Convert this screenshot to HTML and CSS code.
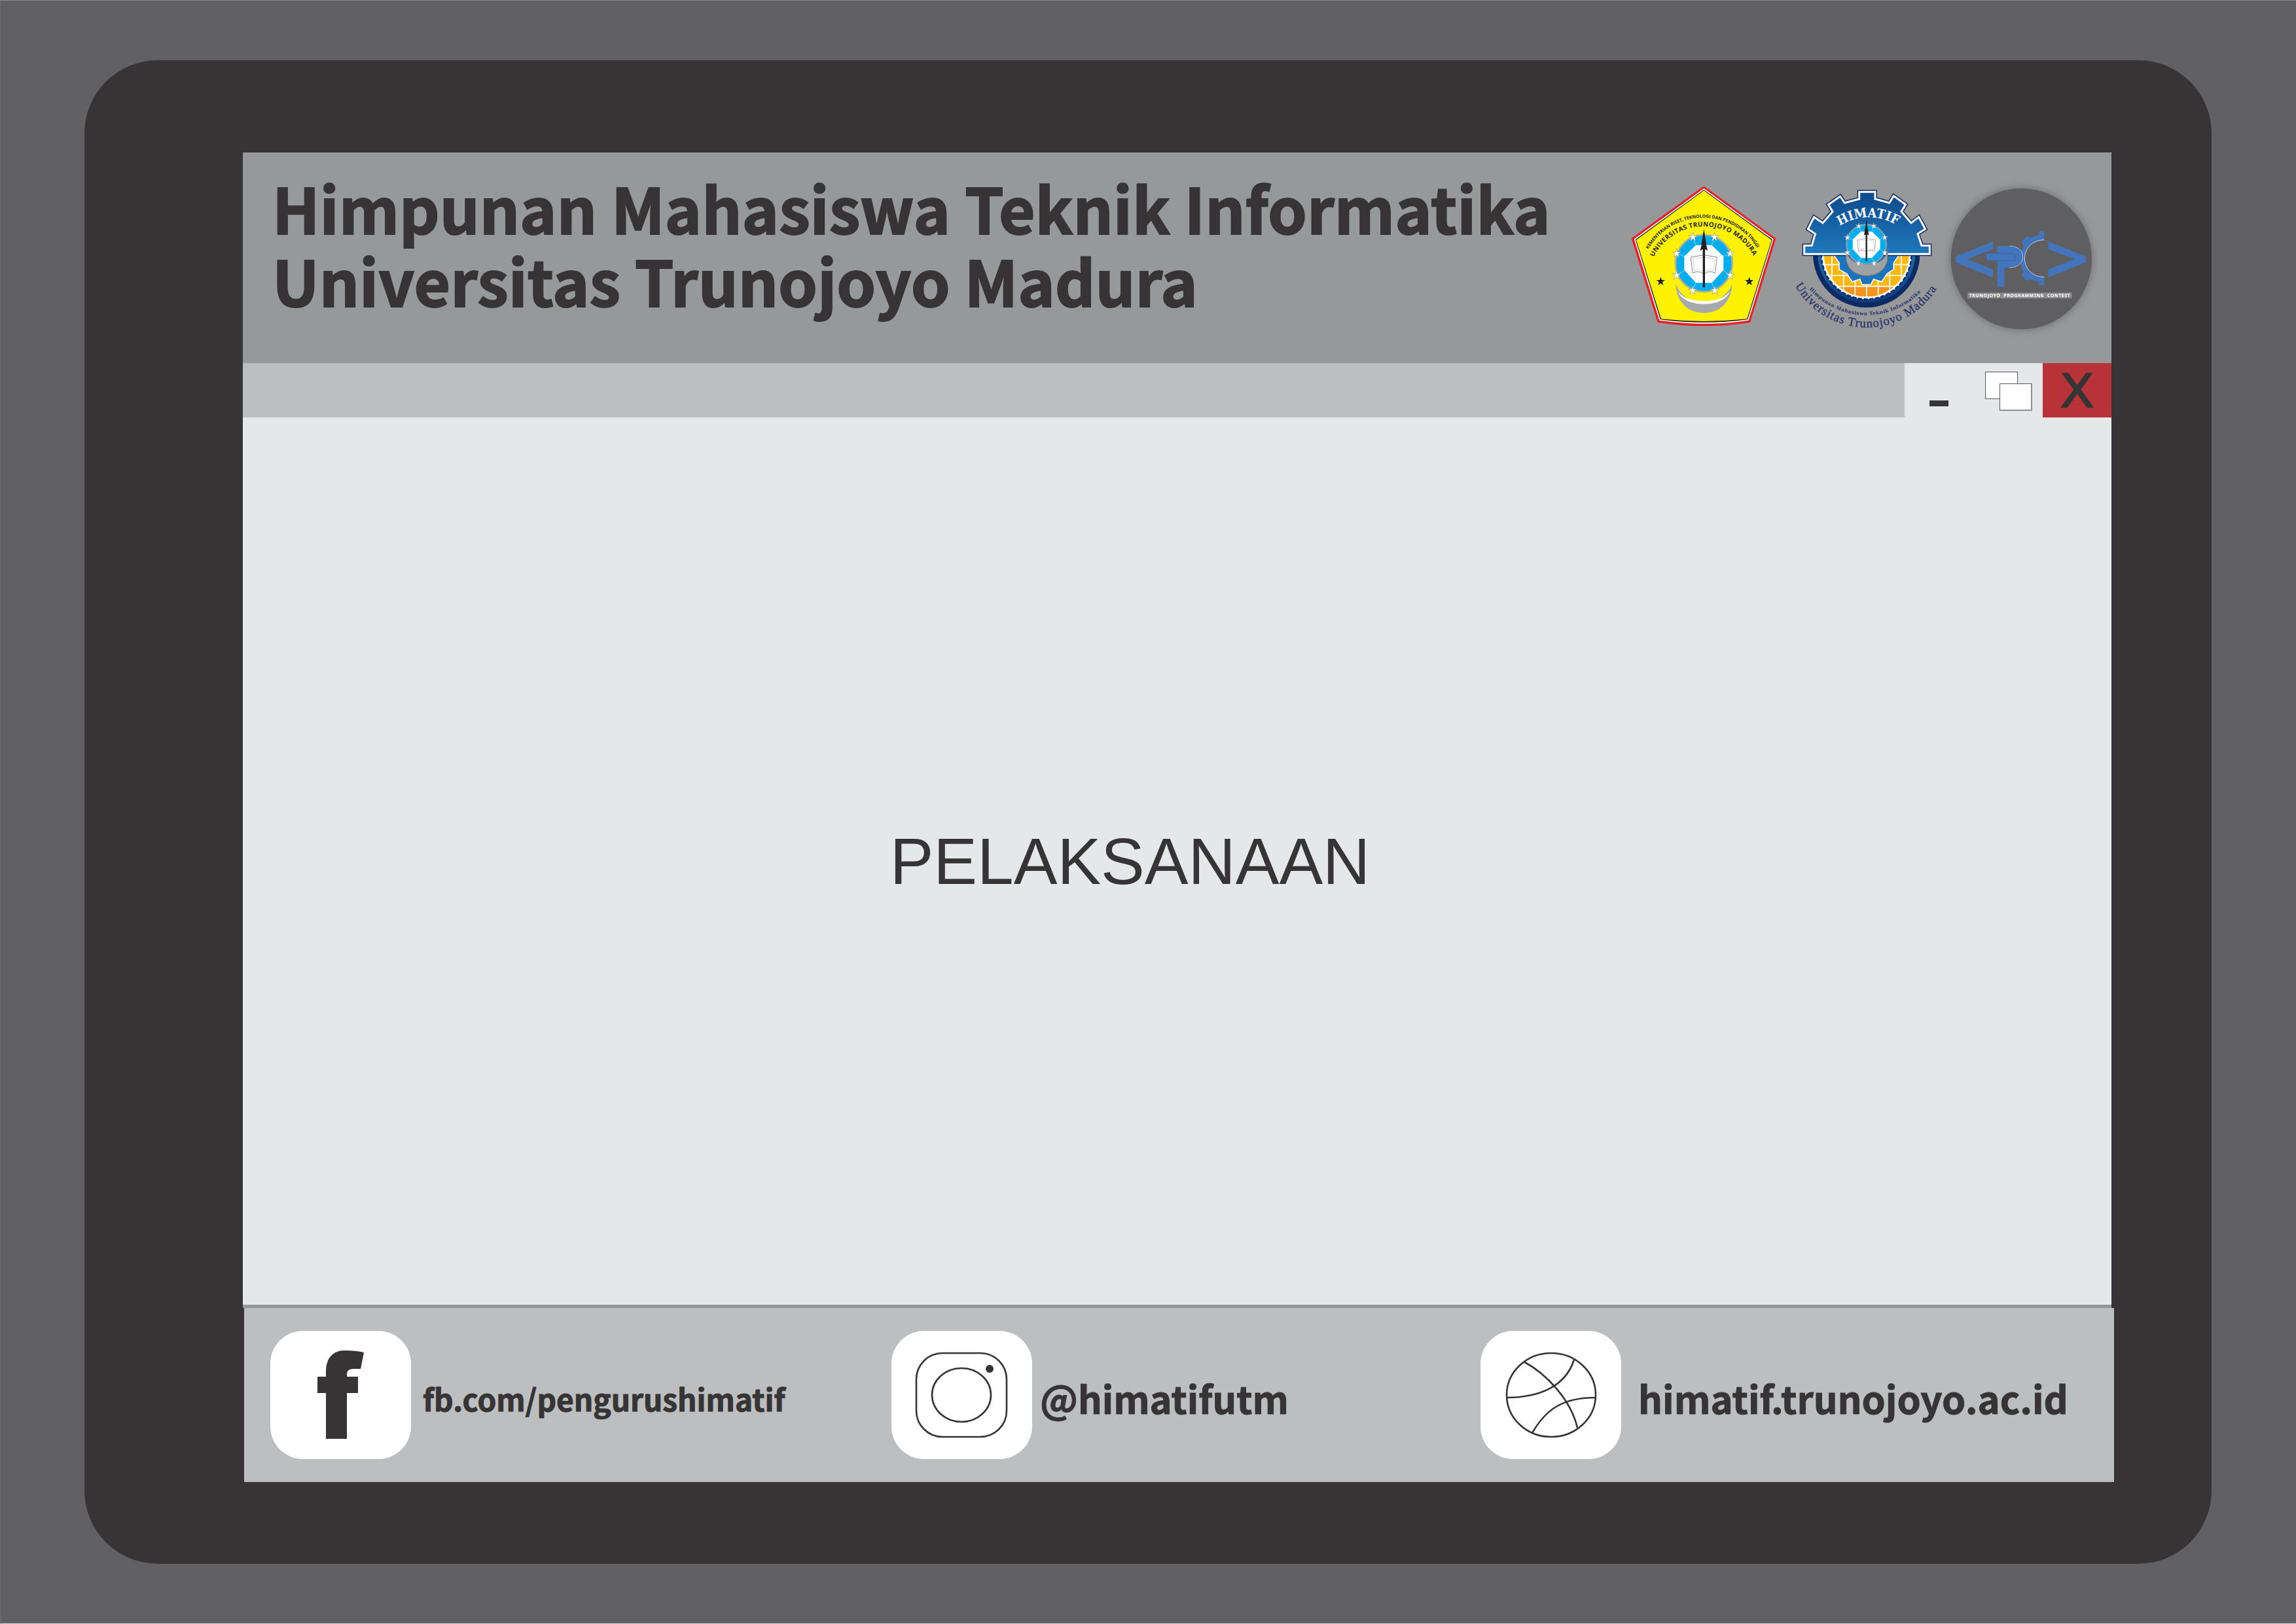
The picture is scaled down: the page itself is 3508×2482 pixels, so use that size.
FILE: index.html
```html
<!DOCTYPE html>
<html lang="id">
<head>
<meta charset="utf-8">
<title>Himpunan Mahasiswa Teknik Informatika</title>
<link rel="stylesheet" href="styles.css">
</head>
<body>
<svg class="defs" width="0" height="0" aria-hidden="true">
  <defs>
    <polygon id="star" points="0,-20 5,-6 20,-6 8,3 12,18 0,9 -12,18 -8,3 -20,-6 -5,-6"/>
    <polygon id="spark" points="0,-22 4,-6 20,-7 7,2 12,18 0,8 -12,18 -7,2 -20,-7 -4,-6" fill="#fff" stroke="#8f9194" stroke-width="2"/>
    <g id="emblem">
      <circle r="130" fill="#00aeef"/>
      <circle r="130" fill="none" stroke="#a7a9ac" stroke-width="10" stroke-dasharray="5 2"/>
      <g stroke="#d7e8ef" stroke-width="2">
        <line x1="-50" y1="-120" x2="-35" y2="-77"/><line x1="48" y1="-120" x2="35" y2="-77"/>
        <line x1="120" y1="-45" x2="85" y2="-30"/><line x1="120" y1="55" x2="85" y2="30"/>
        <line x1="50" y1="125" x2="35" y2="85"/><line x1="-52" y1="125" x2="-35" y2="85"/>
        <line x1="-125" y1="55" x2="-85" y2="30"/><line x1="-125" y1="-45" x2="-85" y2="-30"/>
      </g>
      <polygon points="-35,-80 35,-80 87,-30 87,30 35,87 -35,87 -87,30 -87,-30" fill="#fff" stroke="#fff" stroke-width="6" stroke-linejoin="round"/>
      <path d="M-60 -28 L0 -38 L60 -28 L52 45 Q22 30 0 50 Q-22 30 -52 45 Z" fill="#fff" stroke="#6d6e71" stroke-width="2.5"/>
      <path d="M-50 -20 L0 -28 L50 -20 L44 35 Q20 22 0 40 Q-20 22 -44 35 Z" fill="none" stroke="#a7a9ac" stroke-width="1.5"/>
      <use href="#spark" x="-50" y="-120"/><use href="#spark" x="48" y="-120"/>
      <use href="#spark" x="120" y="-45"/><use href="#spark" x="120" y="55"/>
      <use href="#spark" x="50" y="125"/><use href="#spark" x="-52" y="125"/>
      <use href="#spark" x="-125" y="55"/><use href="#spark" x="-125" y="-45"/>
      <rect x="-5" y="-55" width="10" height="165" fill="#231f20"/>
      <path d="M0 -158 C6 -125 6 -105 12 -90 C8 -80 18 -70 16 -58 L5 -65 L5 -48 L-5 -48 L-5 -65 L-16 -58 C-16 -70 -8 -80 -12 -90 C-6 -105 -6 -125 0 -158 Z" fill="#231f20"/>
    </g>
    <linearGradient id="gearBlue" x1="0" y1="0" x2="0" y2="1">
      <stop offset="0" stop-color="#0d4a8b"/>
      <stop offset="1" stop-color="#1f78bd"/>
    </linearGradient>
    <linearGradient id="ringBlue" x1="0" y1="0" x2="0" y2="1">
      <stop offset="0" stop-color="#1c6fb4"/>
      <stop offset="1" stop-color="#0f3a7c"/>
    </linearGradient>
    <clipPath id="disc"><path d="M170 355 A195 195 0 0 0 560 355 Z"/></clipPath>
    <path id="arcUtmSmall" d="M115 333 A290 290 0 0 1 617 333"/>
    <path id="arcUtmBig" d="M140 368 A259 259 0 0 1 600 368"/>
    <path id="arcHimatif" d="M243 226 A245 245 0 0 1 510 226"/>
    <path id="arcHimpunan" d="M103 515 A346 346 0 0 0 627 515"/>
    <path id="arcUniv" d="M38 500 A378 378 0 0 0 695 500"/>
    <filter id="soft" x="-20%" y="-20%" width="140%" height="140%"><feGaussianBlur stdDeviation="18"/></filter>
  </defs>
</svg>

<main class="panel">
  <section class="window">
    <header class="head">
      <h1 class="title">Himpunan Mahasiswa Teknik Informatika<br>Universitas Trunojoyo Madura</h1>
      <div class="logos">
        <svg class="logo logo-utm" viewBox="0 0 780 720">
          <path d="M370 43 L700 283 L582 668 Q370 702 158 668 L38 283 Z" fill="#ed1c24"/>
          <path d="M370 54 L689 286 L575 659 Q370 690 166 659 L50 286 Z" fill="#fff"/>
          <path d="M370 60 L684 288 L571 655 Q370 682 170 655 L56 288 Z" fill="#231f20"/>
          <path d="M370 64 L680 290 L568 652 Q370 674 174 652 L60 290 Z" fill="#fff200"/>
          <use href="#emblem" x="370" y="397"/>
          <path d="M240 490 C245 580 300 625 370 625 C440 625 495 580 500 490 C480 545 430 578 370 578 C310 578 260 545 240 490 Z" fill="#a7a9ac"/>
          <path d="M250 525 C275 560 320 570 370 570 C420 570 465 560 490 525 C470 570 420 584 370 584 C320 584 270 570 250 525 Z" fill="#fff"/>
          <use href="#star" x="172" y="480" fill="#231f20"/>
          <use href="#star" x="578" y="480" fill="#231f20"/>
          <text class="arc-small"><textPath href="#arcUtmSmall" textLength="600">KEMENTERIAN RISET, TEKNOLOGI  DAN PENDIDIKAN TINGGI</textPath></text>
          <text class="arc-big"><textPath href="#arcUtmBig" textLength="560">UNIVERSITAS TRUNOJOYO MADURA</textPath></text>
        </svg>
        <svg class="logo logo-himatif" viewBox="0 0 780 720">
          <path d="M120 355 A245 245 0 0 0 610 355 Z" fill="#0e2a63"/>
          <path d="M142 355 A223 223 0 0 0 588 355 Z" fill="url(#ringBlue)"/>
          <path d="M158 355 A207 207 0 0 0 572 355 Z" fill="#fff"/>
          <path d="M158 355 A207 207 0 0 0 572 355" fill="none" stroke="#14306b" stroke-width="8" stroke-dasharray="18 8"/>
          <g clip-path="url(#disc)">
            <rect x="160" y="355" width="410" height="205" fill="#fdb913"/>
            <rect x="160" y="505" width="410" height="60" fill="#f7941d"/>
            <path d="M207 355V560M260 355V560M313 355V560M366 355V560M419 355V560M472 355V560M525 355V560M160 403H570M160 453H570M160 503H570" stroke="#fff" stroke-width="5" fill="none"/>
          </g>
          <path d="M212 355 L240 395 L240 425 L275 445 L300 482 L335 470 L345 495 L385 495 L398 470 L435 482 L460 445 L490 425 L490 395 L518 355 Z" fill="#1c75bc" stroke="#fff" stroke-width="5"/>
          <path d="M332 70 L405 70 L405 102 L470 120 L490 88 L545 128 L525 160 L570 212 L605 185 L635 240 L600 262 L618 316 L655 316 L655 355 L80 355 L80 316 L115 316 L130 262 L97 240 L125 185 L165 212 L210 160 L190 128 L245 90 L265 120 L332 102 Z" fill="url(#gearBlue)" stroke="#0e2a63" stroke-width="18" stroke-linejoin="miter"/>
          <path d="M332 70 L405 70 L405 102 L470 120 L490 88 L545 128 L525 160 L570 212 L605 185 L635 240 L600 262 L618 316 L655 316 L655 355 L80 355 L80 316 L115 316 L130 262 L97 240 L125 185 L165 212 L210 160 L190 128 L245 90 L265 120 L332 102 Z" fill="url(#gearBlue)" stroke="#fff" stroke-width="9" stroke-linejoin="miter"/>
          <path d="M272 335 C280 425 455 425 462 335 L462 378 C450 480 282 480 272 378 Z" fill="#a0a1a3" stroke="#6d6e71" stroke-width="3"/>
          <use href="#emblem" transform="translate(365 310) scale(.7)"/>
          <text class="arc-himatif"><textPath href="#arcHimatif" textLength="275" lengthAdjust="spacingAndGlyphs">HIMATIF</textPath></text>
          <text class="arc-himpunan"><textPath href="#arcHimpunan" textLength="575">Himpunan Mahasiswa Teknik Informatika</textPath></text>
          <text class="arc-univ"><textPath href="#arcUniv" textLength="780">Universitas Trunojoyo Madura</textPath></text>
        </svg>
        <svg class="logo logo-tpc" viewBox="0 0 720 720">
          <circle cx="355" cy="377" r="326" fill="#6f7072" filter="url(#soft)"/>
          <circle cx="355" cy="377" r="323" fill="#5f5f61"/>
          <g fill="#4375bc">
            <path d="M225 297 L225 333 L105 378 L225 425 L225 462 L55 393 L55 365 Z"/>
            <path d="M478 297 L650 365 L650 393 L478 462 L478 425 L600 378 L478 333 Z"/>
            <path d="M245 318 L300 318 C340 318 362 340 362 367 C362 395 340 417 300 417 L277 417 L277 505 L245 505 Z"/>
            <path d="M460 250 L460 290 C405 290 370 330 370 375 C370 420 405 460 460 460 L460 498 L437 498 L437 482 C420 480 405 475 395 468 L382 478 L355 450 L366 438 C355 420 350 400 350 375 C350 355 355 335 366 318 L355 300 L382 272 L395 282 C405 275 420 270 437 268 L437 250 Z"/>
          </g>
          <rect x="195" y="352" width="132" height="33" rx="8" fill="#4375bc" stroke="#3a5f9a" stroke-width="2"/>
          <path d="M460 290 C405 290 370 330 370 375 C370 420 405 460 460 460" fill="none" stroke="#dfe6f0" stroke-width="2.5"/>
          <path d="M300 318 C340 318 362 340 362 367 C362 395 340 417 300 417" fill="none" stroke="#dfe6f0" stroke-width="2"/>
          <rect x="108" y="532" width="479" height="26" rx="4" fill="#8a8b8d"/>
          <text class="tpc-label" x="347" y="553" text-anchor="middle" textLength="462">TRUNOJOYO  PROGRAMMING  CONTEST</text>
        </svg>
      </div>
    </header>

    <div class="bar">
      <div class="ctl ctl-min"><span class="dash"></span></div>
      <div class="ctl ctl-max"><span class="sq sq-back"></span><span class="sq sq-front"></span></div>
      <div class="ctl ctl-close">X</div>
    </div>

    <div class="content"><p class="stage">PELAKSANAAN</p></div>

    <footer class="foot">
      <div class="social social-fb">
        <div class="tile">
          <svg viewBox="0 0 215 196" class="tile-svg">
            <path class="glyph" d="M85 165 L85 95 L72 95 L72 70 L85 70 L85 62 C85 40 97 30 113 30 C125 30 136 31 143 33 L138 58 L130 58 C120 58 117 60 117 68 L117 70 L134 70 L134 95 L117 95 L117 165 Z"/>
          </svg>
        </div>
        <span class="handle handle-fb">fb.com/pengurushimatif</span>
      </div>
      <div class="social social-ig">
        <div class="tile">
          <svg viewBox="0 0 215 196" class="tile-svg">
            <rect class="line" x="38" y="34" width="138" height="128" rx="40"/>
            <ellipse class="line" cx="107" cy="98" rx="45" ry="41"/>
            <circle class="glyph" cx="150" cy="58" r="6"/>
          </svg>
        </div>
        <span class="handle handle-ig">@himatifutm</span>
      </div>
      <div class="social social-web">
        <div class="tile">
          <svg viewBox="0 0 215 196" class="tile-svg">
            <ellipse class="line" cx="108" cy="98" rx="68" ry="64"/>
            <path class="line" d="M66 47 C100 65 138 105 148 148"/>
            <path class="line" d="M143 44 C130 85 90 102 39 102"/>
            <path class="line" d="M176 102 C125 102 100 120 79 156"/>
          </svg>
        </div>
        <span class="handle handle-web">himatif.trunojoyo.ac.id</span>
      </div>
    </footer>
  </section>
</main>
</body>
</html>
```
FILE: styles.css
```css
* { box-sizing: border-box; }
html, body { margin: 0; padding: 0; }
body {
  width: 3508px;
  height: 2482px;
  background: #616163;
  border-top: 1px solid #8b8b8d;
  border-left: 1px solid #6e6e70;
  border-bottom: 1px solid #dcdcdc;
  overflow: hidden;
  padding: 91px 0 0 128px;
}
.defs { display: block; height: 0; width: 0; }
.panel {
  width: 3250px;
  height: 2298px;
  background: #363435;
  border-radius: 112px;
  padding: 141px 0 0 242px;
}
.window { width: 2855px; }
.head {
  height: 322px;
  background: #97989a;
  display: flex;
  justify-content: space-between;
  padding: 37px 16px 0 45px;
}
.title {
  margin: -9px 0 0;
  font-family: "Noto Sans CJK SC", "Noto Sans", sans-serif;
  font-weight: 700;
  font-size: 95.8px;
  line-height: 111px;
  color: #363435;
  white-space: nowrap;
  -webkit-text-stroke: 2px #363435;
}
.logos { display: flex; }
.logo { display: block; height: 240px; overflow: visible; }
.logo-utm { width: 260px; }
.logo-himatif { width: 260px; margin-left: -10px; }
.logo-tpc { width: 240px; margin-left: -20px; }
.arc-small { font: 700 21px "Open Sans", sans-serif; fill: #231f20; }
.arc-big { font: 700 30px "Open Sans", sans-serif; fill: #231f20; }
.arc-himatif { font: 700 60px "DejaVu Serif", serif; fill: #fff; }
.arc-himpunan { font: 700 22px "DejaVu Serif", serif; fill: #27346b; }
.arc-univ { font: 400 56px "Liberation Serif", serif; fill: #27346b; stroke: #27346b; stroke-width: 1px; }
.tpc-label { font: 700 21px "Noto Sans", sans-serif; fill: #fff; white-space: pre; }

.bar {
  height: 83px;
  background: #bcbec0;
  display: flex;
  justify-content: flex-end;
}
.ctl { width: 106px; height: 83px; background: #e6e7e8; position: relative; }
.ctl-min { border-left: 2px solid #d0d1d3; display: flex; justify-content: center; align-items: flex-end; padding-bottom: 17px; }
.dash { width: 29px; height: 9px; background: #363435; margin-right: 2px; }
.sq { position: absolute; width: 50px; height: 42px; background: #fff; border: 1px solid #58595b; }
.sq-back { left: 18px; top: 13px; }
.sq-front { left: 40px; top: 31px; border-bottom: 2px solid #8f9093; border-right: 2px solid #8f9093; }
.ctl-close {
  width: 105px;
  background: #b73337;
  color: #363435;
  font: 400 75px/83px "Liberation Sans", Arial, sans-serif;
  text-align: center;
  -webkit-text-stroke: 2.5px #363435;
}

.content {
  height: 1361px;
  background: #e6e7e8;
  border-bottom: 5px solid #939598;
  display: flex;
  justify-content: center;
  padding-top: 618px;
}
.stage {
  margin: 0 144px 0 0;
  font: 400 100px/120px "Liberation Sans", Arial, sans-serif;
  color: #363435;
}

.foot {
  width: 2857px;
  height: 266px;
  margin-left: 2px;
  background: #bcbec0;
  display: grid;
  grid-template-columns: 949px 900px 1fr;
  padding: 35px 0 0 40px;
}
.social { display: flex; align-items: flex-start; }
.tile { width: 215px; height: 196px; background: #fff; border-radius: 50px; flex: none; }
.tile-svg { display: block; width: 215px; height: 196px; }
.glyph { fill: #363435; }
.line { fill: none; stroke: #363435; stroke-width: 2.6; }
.handle {
  font-family: "Noto Sans CJK SC", "Noto Sans", sans-serif;
  font-weight: 700;
  color: #363435;
  white-space: nowrap;
  -webkit-text-stroke: 1px #363435;
}
.handle-fb { font-size: 46px; line-height: 60px; margin: 73px 0 0 18px; }
.handle-ig { font-size: 57.5px; line-height: 70px; margin: 67px 0 0 12px; }
.handle-web { font-size: 57.9px; line-height: 70px; margin: 67px 0 0 26px; }
```
